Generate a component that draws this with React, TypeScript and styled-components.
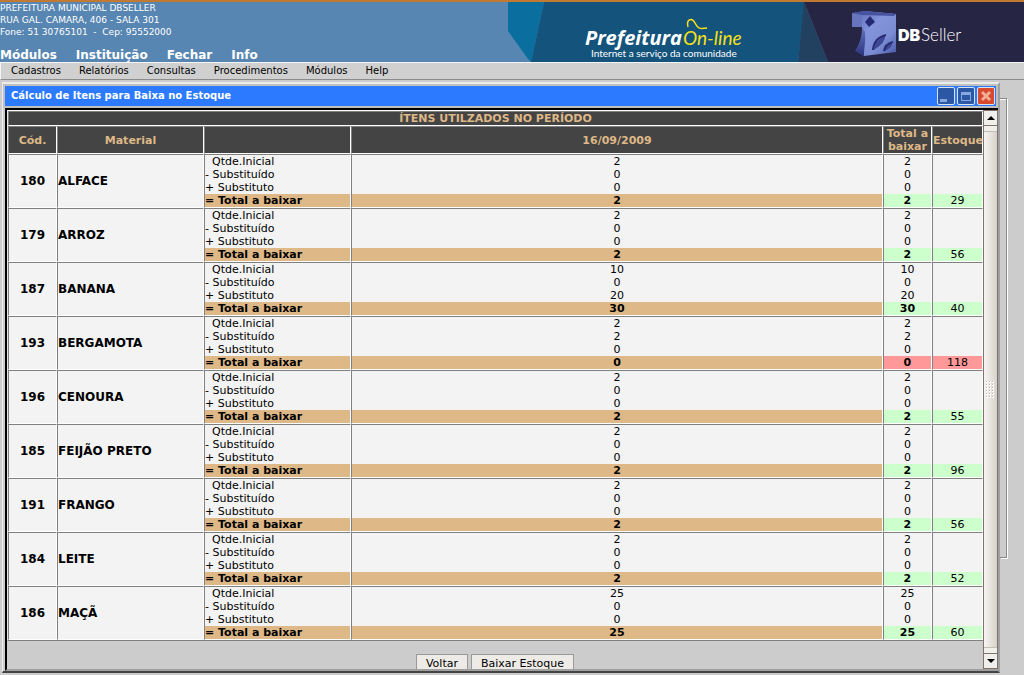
import React, { Fragment } from "react";
import styled, { createGlobalStyle, css } from "styled-components";

const GlobalStyle = createGlobalStyle`
  * { box-sizing: border-box; }
  body {
    margin: 0;
    background: #cccccc;
    color: #000;
    font-family: "DejaVu Sans", Verdana, sans-serif;
    font-size: 11px;
  }
  button { font-family: inherit; color: inherit; margin: 0; }
`;

const Page = styled.div`
  display: flex;
  flex-direction: column;
  height: 100vh;
  overflow: hidden;
`;

const Header = styled.header`
  display: flex;
  justify-content: space-between;
  flex: none;
  background: #5786b2;
  border-top: 2px solid #c27a33;
  color: #fff;
`;

const HeaderText = styled.div`
  display: flex;
  flex-direction: column;
  justify-content: space-between;
  height: 60px;
  white-space: nowrap;
`;

const Address = styled.address`
  font-style: normal;
  font-size: 9px;
  line-height: 12px;
  white-space: pre;
`;

const ModuleNav = styled.nav`
  display: flex;
  gap: 19px;
`;

const ModuleLink = styled.a`
  color: #fff;
  font-size: 12px;
  font-weight: bold;
  line-height: 14px;
  text-decoration: none;
`;

const BannerArt = styled.svg`
  display: block;
  flex: none;
`;

const MenuBar = styled.nav`
  display: flex;
  flex: none;
  gap: 18px;
  height: 18px;
  padding-left: 10px;
  margin-bottom: 2px;
  background: #d0d0d0;
  border: 1px solid #f4f4f4;
  border-bottom-color: #8c8c8c;
  border-right: 0;
`;

const MenuItem = styled.button`
  padding: 0;
  border: 0;
  background: none;
  font-size: 10px;
  line-height: 14px;
`;

const Desktop = styled.main`
  display: flex;
  flex: 1;
  min-height: 0;
  padding: 0 17px 2px 2px;
`;

const BackPanel = styled.div`
  flex: none;
  width: 7px;
  height: 460px;
  margin-top: 16px;
  border: 1px solid #888;
  border-left: 0;
  box-shadow: 1px 1px 0 #fff, inset 0 1px 0 #fff;
`;

const Window = styled.section`
  display: flex;
  flex-direction: column;
  flex: 1;
  min-width: 0;
  border: 2px solid #ececec;
  border-left-width: 1px;
  border-right: 2px solid #a0a0a0;
  border-bottom: 2px solid #444;
`;

const TitleBar = styled.div`
  display: flex;
  align-items: center;
  justify-content: space-between;
  flex: none;
  height: 24px;
  padding: 0 1px 0 6px;
  background: #2b7aff;
  border: 2px solid #c0c0c0;
`;

const WindowTitle = styled.h1`
  margin: 0;
  color: #fff;
  font-size: 10px;
  font-weight: bold;
  line-height: 20px;
`;

const WindowControls = styled.div`
  display: flex;
  gap: 2px;
`;

const ControlButton = styled.button<{ $close?: boolean }>`
  display: flex;
  width: 18px;
  height: 18px;
  padding: 0;
  border: 1px solid #d8e2f0;
  border-radius: 2px;
  background: ${(p) => (p.$close ? "#d84a2b" : "#2b57a5")};
`;

const Frame = styled.div`
  display: flex;
  flex: 1;
  min-height: 0;
  margin-left: 2px;
  border-top: 2px solid #000;
  border-left: 2px solid #000;
  border-bottom: 2px solid #a0a0a0;
`;

const Content = styled.div`
  flex: 1;
  min-width: 0;
  overflow: hidden;
`;

const ItemsTable = styled.table`
  width: 100%;
  table-layout: fixed;
  border-collapse: separate;
  border-spacing: 0;
  border: 1px solid #fff;
  border-right: 0;
  border-left-color: #e4e4e4;
  border-bottom-color: #808080;
  line-height: 13px;
`;

const Col = styled.col<{ $width?: number }>`
  width: ${(p) => (p.$width ? `${p.$width}px` : "auto")};
`;

const cellBorder = css`
  padding: 0;
  border: 1px solid #fff;
  border-top-color: #808080;
  border-left-color: #808080;
`;

const HeadCell = styled.th`
  ${cellBorder}
  background-color: #444;
  color: #deb887;
  text-align: center;
`;

const Cell = styled.td<{ $align?: "left" | "center" }>`
  ${cellBorder}
  background-color: #f3f3f3;
  text-align: ${(p) => p.$align ?? "center"};
`;

const NameCell = styled(Cell)`
  font-size: 12px;
  font-weight: bold;
`;

const StockCell = styled(Cell)`
  vertical-align: bottom;
`;

const Line = styled.div<{ $fill?: string; $bold?: boolean }>`
  height: 13px;
  white-space: pre;
  background: ${(p) => p.$fill ?? "transparent"};
  font-weight: ${(p) => (p.$bold ? "bold" : "normal")};
`;

const Actions = styled.div`
  display: flex;
  justify-content: center;
  gap: 3px;
  padding-top: 13px;
`;

const ActionButton = styled.button`
  height: 19px;
  padding: 0 9px;
  border: 1px solid #999;
  background: #eeebe7;
  font-size: 11px;
  line-height: 17px;
`;

const ScrollBar = styled.div`
  display: flex;
  flex-direction: column;
  flex: none;
  width: 15px;
  background: #f1efec;
  border: 1px solid #80736b;
`;

const ScrollButton = styled.button`
  display: flex;
  align-items: center;
  justify-content: center;
  flex: none;
  height: 14px;
  padding: 0;
  border: 0;
  background: #f1efec;
`;

const ScrollTrack = styled.div`
  display: flex;
  flex: 1;
  padding: 5px 0;
  border-top: 1px solid #80736b;
  border-bottom: 1px solid #80736b;
`;

const ScrollThumb = styled.div`
  display: flex;
  align-items: center;
  justify-content: center;
  flex: 1;
  border-top: 1px solid #c4bdb6;
  border-bottom: 1px solid #c4bdb6;
  background: linear-gradient(to right, #f7f5f3, #d8d1cb);
`;

type Item = {
  code: number;
  name: string;
  values: [number, number, number, number];
  stock: number;
};

const items: Item[] = [
  { code: 180, name: "ALFACE", values: [2, 0, 0, 2], stock: 29 },
  { code: 179, name: "ARROZ", values: [2, 0, 0, 2], stock: 56 },
  { code: 187, name: "BANANA", values: [10, 0, 20, 30], stock: 40 },
  { code: 193, name: "BERGAMOTA", values: [2, 2, 0, 0], stock: 118 },
  { code: 196, name: "CENOURA", values: [2, 0, 0, 2], stock: 55 },
  { code: 185, name: "FEIJÃO PRETO", values: [2, 0, 0, 2], stock: 96 },
  { code: 191, name: "FRANGO", values: [2, 0, 0, 2], stock: 56 },
  { code: 184, name: "LEITE", values: [2, 0, 0, 2], stock: 52 },
  { code: 186, name: "MAÇÃ", values: [25, 0, 0, 25], stock: 60 },
];

const labels = ["  Qtde.Inicial", "- Substituído", "+ Substituto", "= Total a baixar"];
const modules = ["Módulos", "Instituição", "Fechar", "Info"];
const menus = ["Cadastros", "Relatórios", "Consultas", "Procedimentos", "Módulos", "Help"];

function Stack({ lines, fill }: { lines: (string | number)[]; fill: string }) {
  return (
    <Fragment>
      {lines.map((text, i) => (
        <Line key={i} $bold={i === 3} $fill={i === 3 ? fill : undefined}>
          {text}
        </Line>
      ))}
    </Fragment>
  );
}

function ItemRow({ item }: { item: Item }) {
  const status = item.values[3] > 0 ? "#ccffcc" : "#ff9999";
  return (
    <tr>
      <NameCell>{item.code}</NameCell>
      <NameCell $align="left">{item.name}</NameCell>
      <Cell $align="left">
        <Stack lines={labels} fill="#deb887" />
      </Cell>
      <Cell>
        <Stack lines={item.values} fill="#deb887" />
      </Cell>
      <Cell>
        <Stack lines={item.values} fill={status} />
      </Cell>
      <StockCell>
        <Line $fill={status}>{item.stock}</Line>
      </StockCell>
    </tr>
  );
}

function Banner() {
  return (
    <BannerArt width="516" height="60" viewBox="0 0 516 60" aria-label="Prefeitura On-line, DBSeller">
      <defs>
        <linearGradient id="front" x1="0" y1="0" x2="1" y2="1">
          <stop offset="0" stopColor="#5564b4" />
          <stop offset="0.4" stopColor="#8494da" />
          <stop offset="0.7" stopColor="#7c8cd2" />
          <stop offset="1" stopColor="#4656a8" />
        </linearGradient>
        <linearGradient id="side" x1="0" y1="0" x2="0" y2="1">
          <stop offset="0" stopColor="#6674bc" />
          <stop offset="1" stopColor="#2a3580" />
        </linearGradient>
      </defs>
      <path d="M0 0H36L23 60L20 57L0 29Z" fill="#0a6f9f" />
      <path d="M36 0H297L290 60H23Z" fill="#14547c" />
      <path d="M296 0L320 60H290Z" fill="#22405f" />
      <path d="M296 0H516V60H320Z" fill="#272544" />
      <text x="77" y="43" fill="#fff" fontFamily='"Open Sans", sans-serif' fontStyle="italic" fontWeight="700" fontSize="20">
        Prefeitura
      </text>
      <text x="175" y="43" fill="#f7e017" fontFamily='"Lato", sans-serif' fontStyle="italic" fontSize="19">
        On-line
      </text>
      <path d="M180 25C178 17 184 15 187 21C190 27 192 27 199 26" fill="none" stroke="#f7e017" strokeWidth="1.5" />
      <text x="83" y="55" fill="#fff" fontFamily="Lato, sans-serif" fontSize="10">
        Internet a serviço da comunidade
      </text>
      <path d="M344 11L357 9L388 12V50L356 54L348 48C353 40 355 32 354 25L344 25Z" fill="url(#front)" />
      <path d="M344 11L354 13V25H344Z" fill="#6675be" />
      <path d="M354 25L357 30C358 39 356 45 356 54L347 49C352 42 354 34 354 25Z" fill="url(#side)" />
      <path d="M344 11L357 9L388 12L386 14L354 13Z" fill="#4753a0" />
      <path d="M362 14L367 20L361 25L357 20Z" fill="#262a74" />
      <path d="M377 34Q378 40 366 48Q367 38 377 34Z" fill="#3c4896" />
      <path d="M384 41Q385 45 377 49Q377 43 384 41Z" fill="#3c4896" />
      <path d="M378 33Q366 36 365 48" fill="none" stroke="#262c72" strokeWidth="2" />
      <path d="M385 40Q377 42 376 49" fill="none" stroke="#262c72" strokeWidth="2" />
      <text x="390" y="39" fill="#fff" fontFamily="Inter, sans-serif" fontWeight="900" fontSize="16">DB</text>
      <text x="413" y="39" fill="#fff" fontFamily="Lato, sans-serif" fontWeight="300" fontSize="17">Seller</text>
    </BannerArt>
  );
}

export default function App() {
  return (
    <Page>
      <GlobalStyle />
      <Header>
        <HeaderText>
          <Address>
            PREFEITURA MUNICIPAL DBSELLER
            <br />
            RUA GAL. CAMARA, 406 - SALA 301
            <br />
            {"Fone: 51 30765101  -  Cep: 95552000"}
          </Address>
          <ModuleNav>
            {modules.map((name) => (
              <ModuleLink key={name} href="#">{name}</ModuleLink>
            ))}
          </ModuleNav>
        </HeaderText>
        <Banner />
      </Header>
      <MenuBar>
        {menus.map((name) => (
          <MenuItem key={name} type="button">{name}</MenuItem>
        ))}
      </MenuBar>
      <Desktop>
        <Window>
          <TitleBar>
            <WindowTitle>Cálculo de Itens para Baixa no Estoque</WindowTitle>
            <WindowControls>
              <ControlButton type="button" aria-label="Minimizar">
                <svg width="16" height="16">
                  <rect x="2" y="11" width="7" height="3" fill="#86a8dc" />
                </svg>
              </ControlButton>
              <ControlButton type="button" aria-label="Maximizar">
                <svg width="16" height="16">
                  <rect x="3.5" y="4.5" width="9" height="8" fill="none" stroke="#86a8dc" />
                  <rect x="3" y="4" width="10" height="3" fill="#86a8dc" />
                </svg>
              </ControlButton>
              <ControlButton type="button" aria-label="Fechar" $close>
                <svg width="16" height="16">
                  <path d="M4 4L12 12M12 4L4 12" stroke="#f0ad98" strokeWidth="3" />
                </svg>
              </ControlButton>
            </WindowControls>
          </TitleBar>
          <Frame>
            <Content>
              <ItemsTable>
                <colgroup>
                  <Col $width={49} />
                  <Col $width={147} />
                  <Col $width={147} />
                  <Col />
                  <Col $width={49} />
                  <Col $width={51} />
                </colgroup>
                <thead>
                  <tr>
                    <HeadCell colSpan={6}>ÍTENS UTILZADOS NO PERÍODO</HeadCell>
                  </tr>
                  <tr>
                    <HeadCell>Cód.</HeadCell>
                    <HeadCell>Material</HeadCell>
                    <HeadCell />
                    <HeadCell>16/09/2009</HeadCell>
                    <HeadCell>Total a baixar</HeadCell>
                    <HeadCell>Estoque</HeadCell>
                  </tr>
                </thead>
                <tbody>
                  {items.map((item) => (
                    <ItemRow key={item.code} item={item} />
                  ))}
                </tbody>
              </ItemsTable>
              <Actions>
                <ActionButton type="button">Voltar</ActionButton>
                <ActionButton type="button">Baixar Estoque</ActionButton>
              </Actions>
            </Content>
            <ScrollBar>
              <ScrollButton type="button" aria-label="Rolar para cima">
                <svg width="8" height="4"><path d="M0 4L4 0L8 4Z" fill="#000" /></svg>
              </ScrollButton>
              <ScrollTrack>
                <ScrollThumb>
                  <svg width="9" height="18">
                    {[0, 3, 6, 9, 12, 15].map((y) =>
                      [0, 3, 6].map((x) => (
                        <g key={`${x}-${y}`}>
                          <rect x={x} y={y} width="2" height="2" fill="#fff" />
                          <rect x={x} y={y} width="1" height="1" fill="#bbb3ac" />
                        </g>
                      ))
                    )}
                  </svg>
                </ScrollThumb>
              </ScrollTrack>
              <ScrollButton type="button" aria-label="Rolar para baixo">
                <svg width="8" height="4"><path d="M0 0L4 4L8 0Z" fill="#000" /></svg>
              </ScrollButton>
            </ScrollBar>
          </Frame>
        </Window>
        <BackPanel />
      </Desktop>
    </Page>
  );
}
